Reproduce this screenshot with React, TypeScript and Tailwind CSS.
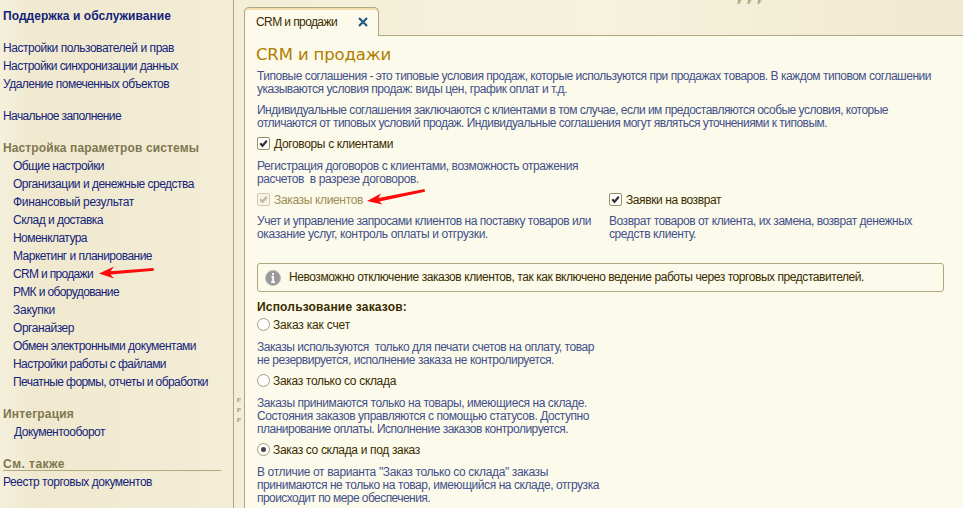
import { useLayoutEffect, useRef } from 'react';

type FitProps = { text: string; w: number; className?: string };

// One line of text whose tracking is adjusted so that it fills the given width.
function Fit({ text, w, className = '' }: FitProps) {
  const ref = useRef<HTMLSpanElement>(null);
  useLayoutEffect(() => {
    const el = ref.current;
    if (!el) return;
    el.style.letterSpacing = '0px';
    const natural = el.getBoundingClientRect().width;
    el.style.letterSpacing = `${(w - natural) / text.length}px`;
  }, [text, w]);
  return (
    <span ref={ref} className={`inline-block self-start whitespace-pre ${className}`}>
      {text}
    </span>
  );
}

type Row = [string, number];

function Links({ rows, className = '' }: { rows: Row[]; className?: string }) {
  return (
    <ul className={`flex flex-col text-[#14237a] ${className}`}>
      {rows.map(([t, w]) => (
        <li key={t} className="flex h-[18px] leading-[18px]">
          <Fit text={t} w={w} />
        </li>
      ))}
    </ul>
  );
}

function Para({ rows, className = '' }: { rows: Row[]; className?: string }) {
  return (
    <div className={`flex flex-col text-[#43508c] ${className}`}>
      {rows.map(([t, w]) => (
        <div key={t} className="flex h-[13px] leading-[13px]">
          <Fit text={t} w={w} />
        </div>
      ))}
    </div>
  );
}

function Check({ text, w, disabled = false }: { text: string; w: number; disabled?: boolean }) {
  return (
    <div className={`flex h-[14px] items-start gap-[4px] leading-[14px] ${disabled ? 'text-[#a08c55]' : 'text-[#3a2b00]'}`}>
      <span className={`flex size-[13px] items-center justify-center rounded-[2px] border ${disabled ? 'border-[#cfcab0] bg-[#f7f4e4]' : 'border-[#958e68] bg-white'}`}>
        <svg width="9" height="9" viewBox="0 0 9 9" fill="none">
          <path d="M1.2 4.2 L3.5 6.8 L7.8 1.8" stroke={disabled ? '#bdb9a4' : '#333'} strokeWidth="2.2" />
        </svg>
      </span>
      <Fit text={text} w={w} />
    </div>
  );
}

function Radio({ text, w, on = false }: { text: string; w: number; on?: boolean }) {
  return (
    <div className="flex h-[14px] items-start gap-[3px] leading-[14px] text-[#3a2b00]">
      <span className="flex size-[13px] items-center justify-center rounded-full border border-[#a39c79] bg-white">
        {on && <span className="size-[5px] rounded-full bg-[#444]" />}
      </span>
      <Fit text={text} w={w} />
    </div>
  );
}

// Small embossed dimple used on the splitters.
function Grip() {
  return (
    <svg className="shrink-0" width="4" height="4" viewBox="0 0 4 4">
      <path d="M0 1 L1 0 H4 V1 H2 V3 L1 4 H0 Z" fill="#b8b18c" />
      <path d="M2 1 H4 V3 L3 4 H1 L2 3 Z" fill="#e0dabd" />
    </svg>
  );
}

// Dimple clipped by the top edge of the window.
function TopGrip() {
  return (
    <svg className="shrink-0" width="5" height="4" viewBox="0 0 5 4">
      <path d="M1 0 H4 L3.5 2 L2 4 H0.5 Z" fill="#b0a984" />
      <path d="M4 0 H5 V1 L3 3.5 L2.2 3.5 Z" fill="#dcd6b8" />
    </svg>
  );
}

export default function App() {
  return (
    <div className="relative flex h-[508px] w-[963px] overflow-hidden bg-[#f1ebd3] font-['Liberation_Sans',Arial,sans-serif] text-[12px]">
      <aside className="flex w-[234px] shrink-0 flex-col border-r border-[#b0a780] bg-gradient-to-r from-[#f5f0dc] via-[#f0e9cf] via-15% to-[#f3edd7] pt-[7px] pl-[3px]">
        <div className="flex h-[18px] font-bold leading-[18px] text-[#14237a]">
          <Fit text="Поддержка и обслуживание" w={168} />
        </div>
        <Links
          className="mt-[14px]"
          rows={[
            ['Настройки пользователей и прав', 171],
            ['Настройки синхронизации данных', 175],
            ['Удаление помеченных объектов', 166],
          ]}
        />
        <Links className="mt-[14px]" rows={[['Начальное заполнение', 118]]} />
        <div className="mt-[14px] flex h-[18px] font-bold leading-[18px] text-[#7f7750]">
          <Fit text="Настройка параметров системы" w={196} />
        </div>
        <Links
          className="pl-[10px]"
          rows={[
            ['Общие настройки', 91],
            ['Организации и денежные средства', 181],
            ['Финансовый результат', 121],
            ['Склад и доставка', 90],
            ['Номенклатура', 74],
            ['Маркетинг и планирование', 139],
            ['CRM и продажи', 80],
            ['РМК и оборудование', 106],
            ['Закупки', 42],
            ['Органайзер', 61],
            ['Обмен электронными документами', 183],
            ['Настройки работы с файлами', 153],
            ['Печатные формы, отчеты и обработки', 195],
          ]}
        />
        <div className="mt-[14px] flex h-[18px] font-bold leading-[18px] text-[#7f7750]">
          <Fit text="Интеграция" w={71} />
        </div>
        <Links className="pl-[11px]" rows={[['Документооборот', 91]]} />
        <div className="mt-[14px] flex h-[16px] w-[218px] border-b border-[#b0a780] font-bold leading-[18px] text-[#7f7750]">
          <Fit text="См. также" w={62} />
        </div>
        <Links className="mt-[2px]" rows={[['Реестр торговых документов', 149]]} />
      </aside>

      <div className="flex w-[10px] shrink-0 flex-col items-center gap-[6px] bg-[#f3eed8] pt-[398px]">
        <Grip />
        <Grip />
        <Grip />
      </div>

      <main className="flex min-w-0 flex-1 flex-col">
        <div className="flex h-[36px] shrink-0 items-end bg-gradient-to-r from-[#f3eed6] via-[#f6f2dc] to-[#f0e9cf]">
          <div className="flex h-[29px] w-[135px] shrink-0 items-start justify-between rounded-t-[5px] border border-b-0 border-[#b0a780] bg-[#fcfaea] pt-[6px] pr-[10px] pl-[11px] leading-[16px] text-[#3a2b00] shadow-[inset_0_2px_0_#f4dfae]">
            <Fit text="CRM и продажи" w={81} />
            <svg className="mt-[3px]" width="10" height="10" viewBox="0 0 10 10">
              <path d="M1 1 L9 9 M9 1 L1 9" stroke="#28587f" strokeWidth="2.2" />
            </svg>
          </div>
          <div className="flex h-full flex-1 items-start gap-[5px] border-b border-[#b0a780] pl-[358px]">
            <TopGrip />
            <TopGrip />
            <TopGrip />
          </div>
        </div>

        <section className="flex flex-1 flex-col border-l border-[#b0a780] bg-[#fcfaea] pl-[12px]">
          <h1 className="-ml-[1px] mt-[8px] flex h-[22px] font-['DejaVu_Sans',Verdana,sans-serif] text-[16.5px] leading-[22px] text-[#b07d00]">
            <Fit text="CRM и продажи" w={135} />
          </h1>
          <Para
            className="mt-[4px]"
            rows={[
              ['Типовые соглашения - это типовые условия продаж, которые используются при продажах товаров. В каждом типовом соглашении', 674],
              ['указываются условия продаж: виды цен, график оплат и т.д.', 310],
            ]}
          />
          <Para
            className="mt-[8px]"
            rows={[
              ['Индивидуальные соглашения заключаются с клиентами в том случае, если им предоставляются особые условия, которые', 631],
              ['отличаются от типовых условий продаж. Индивидуальные соглашения могут являться уточнениями к типовым.', 570],
            ]}
          />
          <div className="mt-[7px]">
            <Check text="Договоры с клиентами" w={119} />
          </div>
          <Para
            className="mt-[9px]"
            rows={[
              ['Регистрация договоров с клиентами, возможность отражения', 321],
              ['расчетов  в разрезе договоров.', 162],
            ]}
          />
          <div className="mt-[7px] flex">
            <div className="flex w-[352px] flex-col">
              <Check text="Заказы клиентов" w={89} disabled />
              <Para
                className="mt-[8px]"
                rows={[
                  ['Учет и управление запросами клиентов на поставку товаров или', 334],
                  ['оказание услуг, контроль оплаты и отгрузки.', 231],
                ]}
              />
            </div>
            <div className="flex flex-col">
              <Check text="Заявки на возврат" w={95} />
              <Para
                className="mt-[8px]"
                rows={[
                  ['Возврат товаров от клиента, их замена, возврат денежных', 303],
                  ['средств клиенту.', 87],
                ]}
              />
            </div>
          </div>
          <div className="mt-[22px] flex h-[29px] w-[687px] shrink-0 items-center gap-[8px] rounded-[3px] border border-[#b0a780] pl-[7px] leading-[27px] text-[#3a2b00]">
            <svg width="16" height="16" viewBox="0 0 16 16">
              <circle cx="8" cy="8" r="7.5" fill="#999" stroke="#bbb" />
              <path d="M8 3v2.3M6.5 7h1.6v5M6.2 12h3.8" stroke="#fff" strokeWidth="1.8" fill="none" />
            </svg>
            <Fit text="Невозможно отключение заказов клиентов, так как включено ведение работы через торговых представителей." w={575} />
          </div>
          <div className="mt-[8px] flex h-[14px] font-bold leading-[14px] text-[#3a2b00]">
            <Fit text="Использование заказов:" w={150} />
          </div>
          <div className="mt-[4px]">
            <Radio text="Заказ как счет" w={77} />
          </div>
          <Para
            className="mt-[9px]"
            rows={[
              ['Заказы используются  только для печати счетов на оплату, товар', 337],
              ['не резервируется, исполнение заказа не контролируется.', 297],
            ]}
          />
          <div className="mt-[7px]">
            <Radio text="Заказ только со склада" w={123} />
          </div>
          <Para
            className="mt-[9px]"
            rows={[
              ['Заказы принимаются только на товары, имеющиеся на складе.', 330],
              ['Состояния заказов управляются с помощью статусов. Доступно', 332],
              ['планирование оплаты. Исполнение заказов контролируется.', 311],
            ]}
          />
          <div className="mt-[7px]">
            <Radio text="Заказ со склада и под заказ" w={147} on />
          </div>
          <Para
            className="mt-[9px]"
            rows={[
              ['В отличие от варианта "Заказ только со склада" заказы', 291],
              ['принимаются не только на товар, имеющийся на складе, отгрузка', 342],
              ['происходит по мере обеспечения.', 173],
            ]}
          />
        </section>
      </main>

      <svg className="pointer-events-none absolute inset-0" width="963" height="508" viewBox="0 0 963 508">
        <g fill="#fb0b0b">
          <path d="M99 273.5 L114 266.5 L110.5 271.3 L153.5 268 L154 270.8 L110.5 274.6 L114 278.5 Z" />
          <path d="M367 201 L381 193.5 L378.5 198 L424.5 189 L425 191.8 L379.5 201.5 L382.5 204.5 Z" />
        </g>
      </svg>
    </div>
  );
}
